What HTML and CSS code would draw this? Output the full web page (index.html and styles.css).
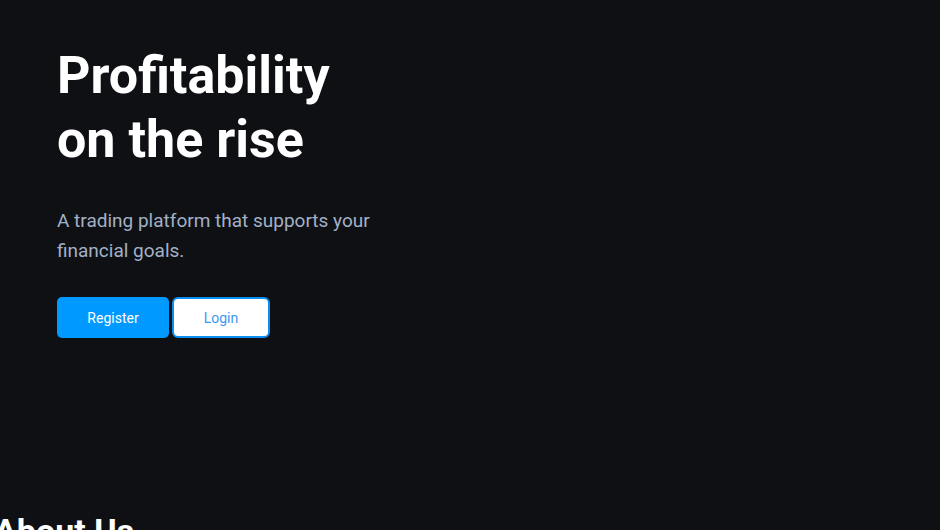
FILE: index.html
```html
<!DOCTYPE html>
<html lang="en">
<head>
<meta charset="utf-8">
<title>Profitability on the rise</title>
<link rel="stylesheet" href="styles.css">
</head>
<body>
<main class="page">
  <section class="hero">
    <h1 class="hero-title">Profitability<br>on the rise</h1>
    <p class="hero-text">A trading platform that supports your<br>financial goals.</p>
    <div class="hero-actions">
      <button class="btn btn-primary">Register</button>
      <button class="btn btn-outline">Login</button>
    </div>
  </section>
  <section class="about">
    <h2 class="about-title">About Us</h2>
  </section>
</main>
</body>
</html>
```

FILE: styles.css
```css
html, body {
  margin: 0;
  padding: 0;
  background: #0f1014;
  height: 100%;
  overflow: hidden;
}
body {
  font-family: Roboto, "Liberation Sans", sans-serif;
  color: #ffffff;
}
.page {
  display: flex;
  flex-direction: column;
}
.hero {
  padding: 44px 0 0 57px;
  height: 460px;
  box-sizing: border-box;
}
.hero-title {
  margin: 0;
  font-size: 52px;
  line-height: 64px;
  font-weight: 700;
  color: #ffffff;
}
.hero-text {
  margin: 34px 0 0;
  font-size: 19px;
  line-height: 30px;
  color: #a3b1c6;
}
.hero-actions {
  display: flex;
  gap: 3px;
  margin-top: 31px;
}
.btn {
  font-family: Roboto, "Liberation Sans", sans-serif;
  font-size: 14px;
  height: 41px;
  border-radius: 5px;
  cursor: pointer;
  box-sizing: border-box;
}
.btn-primary {
  width: 112px;
  background: #0099ff;
  color: #ffffff;
  border: none;
}
.btn-outline {
  width: 98px;
  background: #ffffff;
  color: #3d98f0;
  border: 2px solid #0a8ff0;
  border-radius: 6px;
}
.about {
  padding: 0;
}
.about-title {
  margin: 50px 0 0 -6px;
  font-size: 34px;
  line-height: 42px;
  font-weight: 700;
}
```
